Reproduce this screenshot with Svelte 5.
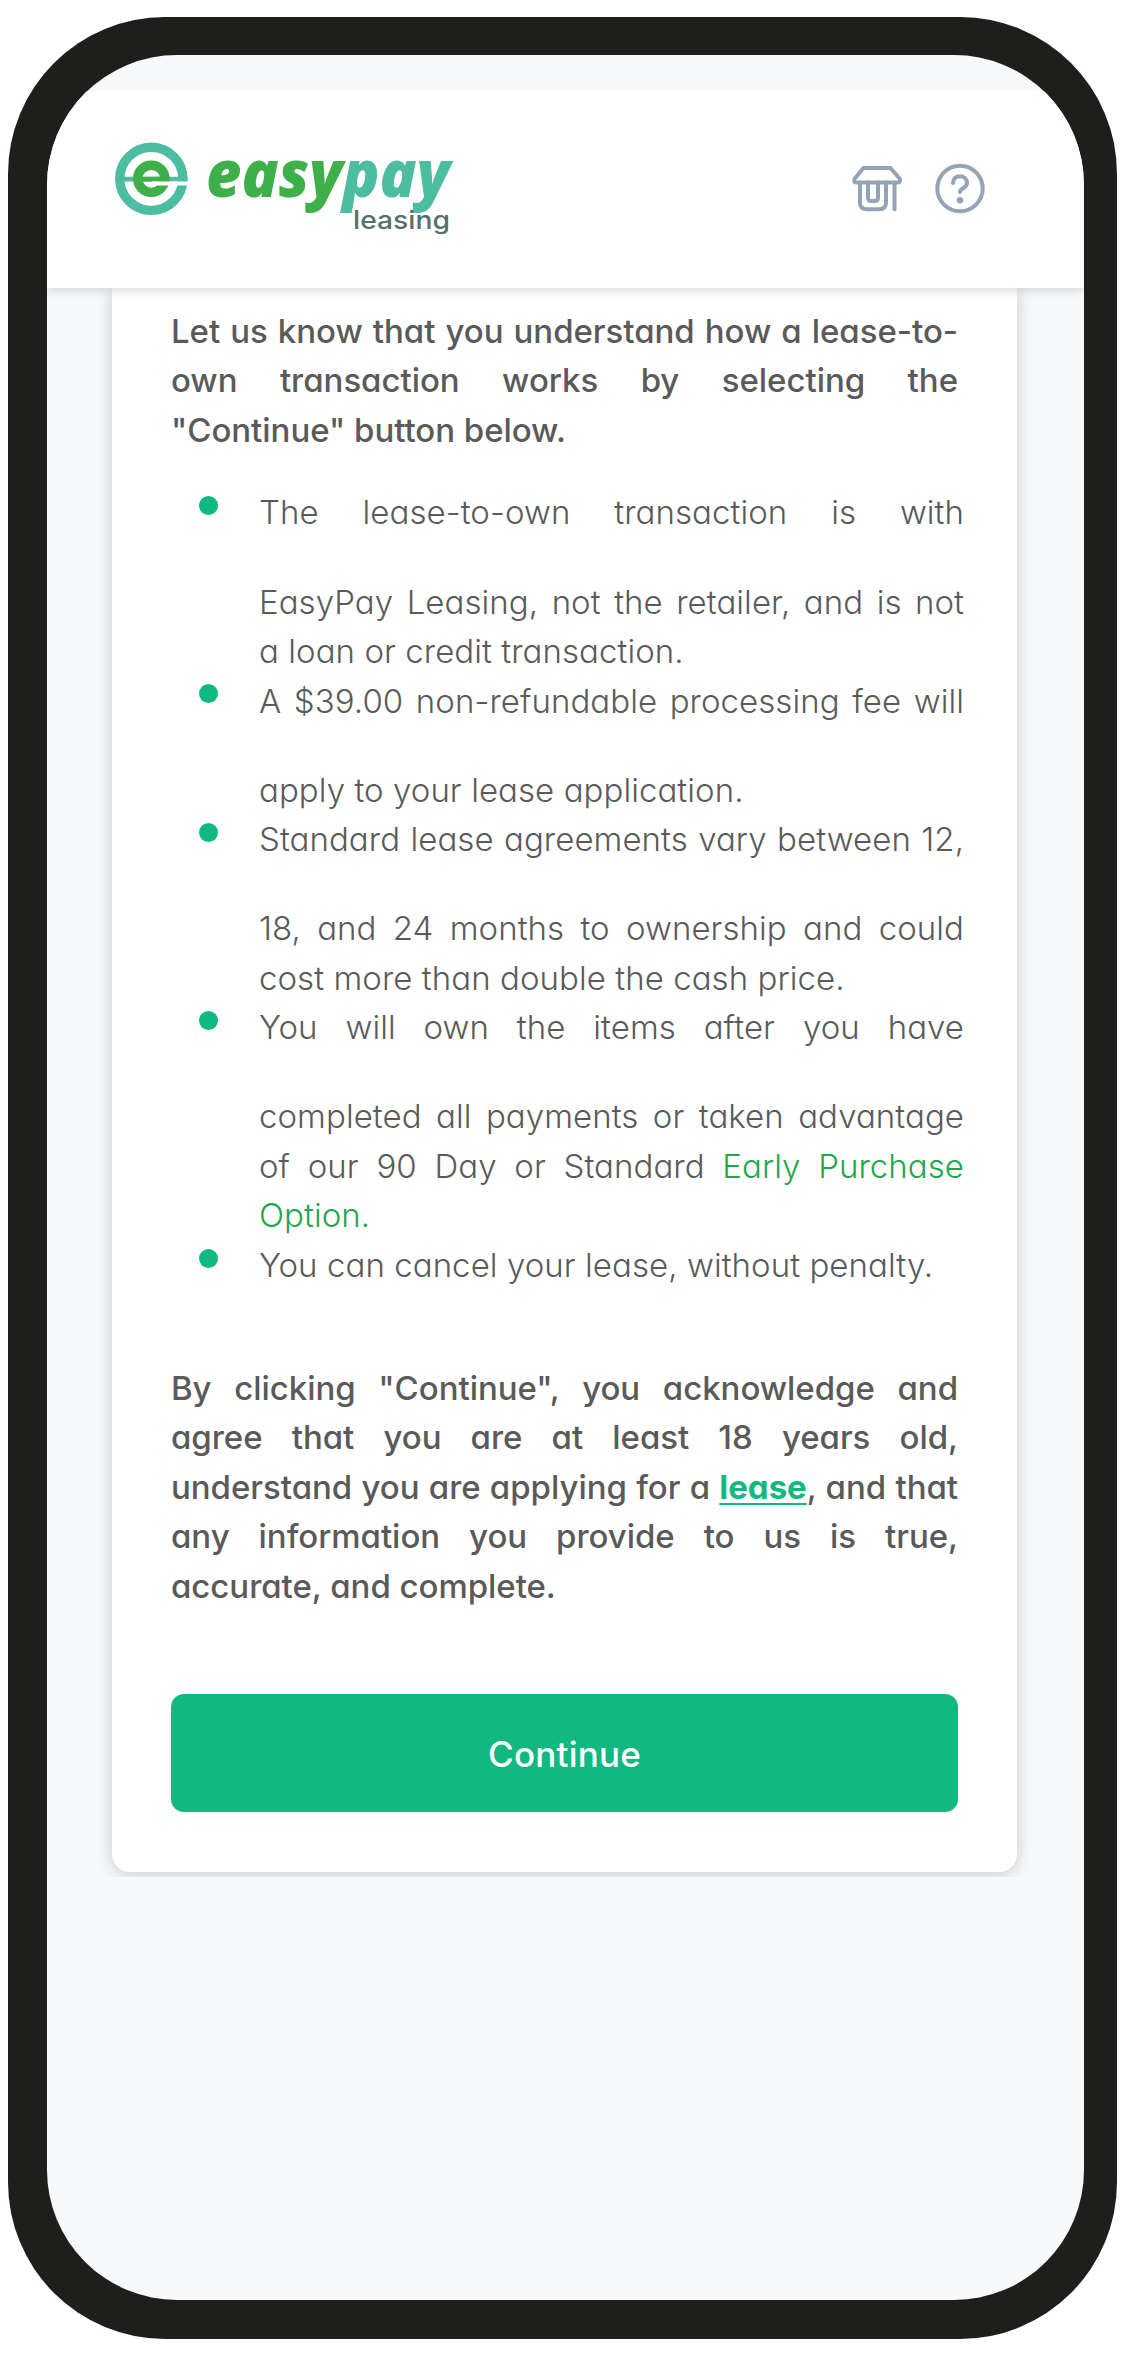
<script>
  const intro = [
    'Let us know that you understand how a lease-to-',
    'own transaction works by selecting the',
    '"Continue" button below.'
  ];

  const terms = [
    [
      'The lease-to-own transaction is with',
      'EasyPay Leasing, not the retailer, and is not',
      'a loan or credit transaction.'
    ],
    ['A $39.00 non-refundable processing fee will', 'apply to your lease application.'],
    [
      'Standard lease agreements vary between 12,',
      '18, and 24 months to ownership and could',
      'cost more than double the cash price.'
    ],
    [
      'You will own the items after you have',
      'completed all payments or taken advantage',
      { text: 'of our 90 Day or Standard ', link: 'Early Purchase' },
      { text: '', link: 'Option.' }
    ],
    ['You can cancel your lease, without penalty.']
  ];
</script>

<div class="phone">
  <div class="screen">
    <header>
      <svg class="logo" viewBox="110 139.5 350 100" role="img" aria-label="easypay leasing">
        <circle cx="151.3" cy="179.3" r="31.6" fill="none" stroke="#4dbda2" stroke-width="9.4" />
        <path d="M120 179.6H187.4" stroke="#4dbda2" stroke-width="4.6" />
        <circle cx="151.3" cy="179.3" r="13.6" fill="none" stroke="#3db049" stroke-width="9.4" />
        <path d="M138 179.6H169.5" stroke="#3db049" stroke-width="4.6" />
        <path d="M152 184H189" stroke="#fff" stroke-width="4.1" />
        <text class="word" x="206" y="197.5" textLength="244" lengthAdjust="spacingAndGlyphs"><tspan fill="#3db049">easy</tspan><tspan fill="#4dbda2">pay</tspan></text>
        <text class="sub" x="353" y="229" textLength="97" lengthAdjust="spacingAndGlyphs">leasing</text>
      </svg>
      <nav>
        <svg class="icon" viewBox="847 158.5 60 60" aria-label="Store">
          <g fill="none" stroke="#94a3b8" stroke-width="4" stroke-linecap="round" stroke-linejoin="round">
            <path d="M863.5 167.5H890.5L900 178.5Q900.5 182 898 182H856Q853.5 182 854.5 178.5Z" />
            <path d="M860 182V202Q860 208.8 867 208.8H879Q886 208.8 886 202V182" />
            <path d="M868 182V197Q868 200.5 871.5 200.5H874.5Q878 200.5 878 197V182" />
            <path d="M894.5 182V208.8" />
          </g>
        </svg>
        <svg class="icon" viewBox="930 158.5 60 60" aria-label="Help">
          <g fill="none" stroke="#94a3b8" stroke-width="4" stroke-linecap="round">
            <circle cx="960" cy="188" r="22.7" />
            <path d="M953 182.5C953 178 956 175.7 960 175.7C964 175.7 967 178.5 967 182.5C967 188 960 187.5 960 191.5" />
          </g>
          <circle cx="960" cy="199.8" r="3.2" fill="#94a3b8" />
        </svg>
      </nav>
    </header>

    <main>
      <section class="card">
        <p>
          {#each intro as line}<span class="line">{line}</span>{/each}
        </p>
        <ul>
          {#each terms as lines}
            <li>
              {#each lines as line}
                {#if typeof line === 'string'}
                  <span class="line">{line}</span>
                {:else}
                  <span class="line">{line.text}<a class="option" href="#option">{line.link}</a></span>
                {/if}
              {/each}
            </li>
          {/each}
        </ul>
        <p>
          <span class="line">By clicking "Continue", you acknowledge and</span>
          <span class="line">agree that you are at least 18 years old,</span>
          <span class="line">understand you are applying for a <a class="lease" href="#lease">lease</a>, and that</span>
          <span class="line">any information you provide to us is true,</span>
          <span class="line">accurate, and complete.</span>
        </p>
        <button>Continue</button>
      </section>
    </main>
  </div>
</div>

<style>
  :global(body) {
    background: #fff;
  }
  .phone {
    box-sizing: border-box;
    width: 1109px;
    height: 2322px;
    margin: 17px 8px 0;
    padding: 38.3px 33.3px 38.7px 38.7px;
    border-radius: 157px;
    background: #1e1e1c;
    font-family: Inter, 'Liberation Sans', sans-serif;
    font-feature-settings: 'cv11';
  }
  :global(#app) {
    display: flow-root;
  }
  .screen {
    height: 100%;
    box-sizing: border-box;
    padding-top: 35.7px;
    border-radius: 130px;
    overflow: hidden;
    background: #f8f9fb;
  }
  header {
    position: relative;
    z-index: 1;
    display: flex;
    align-items: center;
    justify-content: space-between;
    box-sizing: border-box;
    height: 197px;
    padding: 0 93.7px 0 63.3px;
    background: #fff;
    box-shadow: 0 2px 10px rgba(0, 0, 0, 0.16);
    clip-path: inset(0 0 -20px 0);
  }
  .logo {
    width: 350px;
    height: 100px;
    overflow: visible;
  }
  .word {
    font: italic 800 65px 'Open Sans', sans-serif;
  }
  .sub {
    font: 500 25.5px Inter, sans-serif;
    font-feature-settings: normal;
    fill: #56706f;
  }
  nav {
    display: flex;
    gap: 23px;
  }
  .icon {
    width: 60px;
    height: 60px;
  }
  main {
    height: 1589px;
    overflow: hidden;
    padding: 0 66.3px 0 65.3px;
  }
  .card {
    box-sizing: border-box;
    height: 1584px;
    padding: 19px 59.4px 0 59px;
    border-radius: 0 0 18px 18px;
    background: #fff;
    box-shadow: 0 2px 18px rgba(0, 0, 0, 0.2);
    color: #5a5a5a;
    font-size: 33px;
    line-height: 49.5px;
  }
  p {
    margin: 0;
    font-weight: 500;
    font-variant-ligatures: no-common-ligatures no-contextual;
    letter-spacing: -0.04px;
  }
  .line {
    display: block;
    white-space: nowrap;
    text-align: justify;
    text-align-last: justify;
  }
  .line:last-child {
    text-align-last: left;
  }
  ul {
    margin: 33px -6px 73.5px 0;
    padding: 0;
    list-style: none;
    font-weight: 300;
    letter-spacing: 0.06px;
  }
  li {
    position: relative;
    padding-left: 88px;
  }
  li::before {
    content: '';
    position: absolute;
    left: 28px;
    top: 7.8px;
    width: 19px;
    height: 19px;
    border-radius: 50%;
    background: #11b981;
  }
  li .line:first-child:not(:last-child) {
    margin-bottom: 39.6px;
  }
  .option {
    color: #1fa64d;
    text-decoration: none;
  }
  .lease {
    color: #11b981;
    font-weight: 700;
    text-decoration-thickness: 2px;
    text-underline-offset: 4px;
  }
  button {
    display: block;
    width: 100%;
    height: 117.5px;
    margin-top: 83px;
    padding: 1px 0 0;
    border: 0;
    border-radius: 13px;
    background: #11b981;
    color: #fff;
    font: 500 35px Inter, sans-serif;
    letter-spacing: 0.2px;
  }
</style>
